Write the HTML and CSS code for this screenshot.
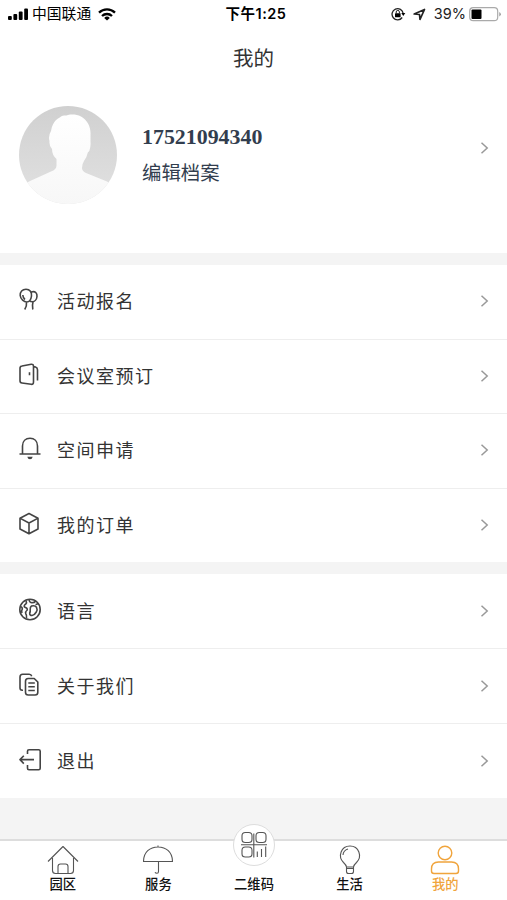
FILE: index.html
```html
<!DOCTYPE html>
<html lang="zh-CN">
<head>
<meta charset="utf-8">
<title>我的</title>
<link rel="stylesheet" href="styles.css">
</head>
<body>
<div class="app">
  <header class="status">
    <div class="status-left">
      <svg width="21" height="12" viewBox="0 0 21 12"><rect x="0" y="8" width="3.800" height="4" rx="1"/><rect x="5.400" y="6" width="3.800" height="6" rx="1"/><rect x="10.800" y="3.500" width="3.800" height="8.500" rx="1"/><rect x="16.200" y="0.500" width="3.800" height="11.500" rx="1"/></svg>
      <span class="carrier">中国联通</span>
      <svg class="wifi" width="18" height="13" viewBox="0 0 18 13"><g fill="none" stroke="#000" stroke-width="2.300"><path d="M1 4.700a11.500 11.500 0 0 1 16 0"/><path d="M4 8a7.300 7.300 0 0 1 10 0"/></g><path d="M9 12.600 6.200 9.900a4 4 0 0 1 5.600 0z"/></svg>
    </div>
    <div class="status-time">下午1:25</div>
    <div class="status-right">
      <svg width="15" height="14" viewBox="0 0 15 14"><path d="M11.200 10.500A5.600 5.600 0 1 1 12.200 6.500" fill="none" stroke="#222" stroke-width="1.300"/><path d="M10.300 6h4l-2 3z"/><rect x="4" y="6.200" width="5.600" height="4" rx=".5"/><path d="M5.200 6.500V5a1.600 1.600 0 0 1 3.200 0v1.500" fill="none" stroke="#222"/></svg>
      <svg class="arrow" width="13" height="13" viewBox="0 0 13 13"><path d="M1.200 6 11.500 1.500 7 11.300 6.500 6.500z" fill="none" stroke="#222" stroke-width="1.700" stroke-linejoin="round"/></svg>
      <span class="percent">39%</span>
      <svg class="battery" width="32" height="15" viewBox="0 0 32 15"><rect x=".7" y=".7" width="28" height="13" rx="3.500" fill="#fff" stroke="#aaa" stroke-width="1.200"/><rect x="2.500" y="2.500" width="10" height="9.500" rx="1"/><path d="M30.300 5v4.500q1.500-.7 1.500-2.200T30.300 5" fill="#999"/></svg>
    </div>
  </header>
  <h1 class="title">我的</h1>
  <section class="profile">
    <svg class="avatar" width="98" height="98" viewBox="0 0 98 98">
      <defs><clipPath id="disc"><circle cx="49" cy="49" r="49"/></clipPath>
      <linearGradient id="back" x2="0" y2="1"><stop stop-color="#d0d0d0"/><stop offset="1" stop-color="#e2e2e2"/></linearGradient>
      <linearGradient id="body" x2="0" y2="1"><stop stop-color="#fff"/><stop offset="1" stop-color="#f7f7f7"/></linearGradient></defs>
      <g clip-path="url(#disc)"><path fill="url(#back)" d="M0 0h98v98H0z"/><path fill="url(#body)" d="M32 25C34 14 39 13 42 10.500c2-1.500 5-.5 7-1.500 4-1 9-.5 13 1.500 7 4 10 11 9.500 18.500v6.500q.5 5-1.200 9.500l-1.500 1.500q-1 5-3.800 8.500-2 3-2 7 0 3 4 5L88 75.500q6 3 10 8v15H0V83.500q4-5 10-8L32 65.500q5.500-2 5.500-6V53q-4.500-4-4.500-10-3-3-2.500-8-1.500-5 1.500-10z"/></g>
    </svg>
    <div class="profile-text"><div class="phone">17521094340</div><div class="edit">编辑档案</div></div>
    <svg class="chevron" width="9" height="12" viewBox="0 0 9 12"><path d="m1.500.8 5.700 5.200-5.700 5.200"/></svg>
  </section>
  <nav class="menu">
    <a class="row"><svg class="icon" viewBox="0 0 24 24"><path d="M8 1.200c4 0 6 3.200 5.500 6.800S11.200 14 8.700 14 2.500 11 2.200 7.500 4.300 1.200 8 1.200zM13.300 4c4-1.400 6 1.300 5.700 4.500s-2.500 5.200-4.500 5.200q-2 0-3.300-1M8.500 14q.5 4-1.800 7.500M15 14q-1 3-.2 7.500M4.800 7q.2 3 2.200 4.500"/></svg><span>活动报名</span><svg class="chevron" width="9" height="12" viewBox="0 0 9 12"><path d="m1.500.8 5.700 5.200-5.700 5.200"/></svg></a>
    <a class="row"><svg class="icon" viewBox="0 0 24 24"><path d="M4 3 13.200 1.200q2.300-.2 2.300 2V19q0 2.600-2.300 2.300L4 20q-2-.2-2-2.300V5.200Q2 3.200 4 3zM15.500 3.500l2 .6q2 .6 2 2.700v10.700M11.500 9.200v3"/></svg><span>会议室预订</span><svg class="chevron" width="9" height="12" viewBox="0 0 9 12"><path d="m1.500.8 5.700 5.200-5.700 5.200"/></svg></a>
    <a class="row"><svg class="icon" viewBox="0 0 24 24"><path d="M1.500 17h21M4.500 17V9c0-5 3.300-7.700 7.500-7.700S19.500 4 19.500 9v8"/><path d="M9.300 19.800h5.400q-.5 2.500-2.700 2.500t-2.700-2.500z" fill="#444" stroke="none"/></svg><span>空间申请</span><svg class="chevron" width="9" height="12" viewBox="0 0 9 12"><path d="m1.500.8 5.700 5.200-5.700 5.200"/></svg></a>
    <a class="row"><svg class="icon" viewBox="0 0 24 24"><path d="m11 1.500 9 4.700V17l-9 4.800L2 17V6.200zM2.300 6.400 11 11l8.700-4.600M11 11v10.500"/></svg><span>我的订单</span><svg class="chevron" width="9" height="12" viewBox="0 0 9 12"><path d="m1.500.8 5.700 5.200-5.700 5.200"/></svg></a>
  </nav>
  <nav class="menu menu-last">
    <a class="row"><svg class="icon" viewBox="0 0 24 24"><circle cx="12" cy="11.500" r="10.200"/><path d="M8 2.500q1 2-.2 3.500Q5.500 7.500 6.500 9q3.200 1 2.700 3-2 1.700-1.500 3.500 1.300 2 .8 4.500M2.300 8.500q2.200.5 2 2.500-1.200 1.700-.3 4M11 1.500q.5 3.200 3 3.200t3.500-1.500M13.500 8q3.500-1 5 1.300 1.300 2.500-.2 4.700-1.800 3.200-4.300 3.500-2.500 0-2.300-2.500.8-1.500.5-3.500-.2-2.500 1.300-3.500zM17.500 6.500q1.500 0 2.500-1.300"/></svg><span>语言</span><svg class="chevron" width="9" height="12" viewBox="0 0 9 12"><path d="m1.500.8 5.700 5.200-5.700 5.200"/></svg></a>
    <a class="row"><svg class="icon" viewBox="0 0 24 24"><path d="M5 17.200H4.200q-2.200 0-2.200-2.200V4q0-2.700 2.700-2.700h6.500q2 0 2.500 2"/><path d="M10.200 5.500h6L19.800 9v10.300q0 2.700-2.700 2.700h-6.900q-2.700 0-2.700-2.700V8.200q0-2.700 2.700-2.700zM10.300 10h6.500M10.300 13.700h6.500M10.300 17.500h6.500"/></svg><span>关于我们</span><svg class="chevron" width="9" height="12" viewBox="0 0 9 12"><path d="m1.500.8 5.700 5.200-5.700 5.200"/></svg></a>
    <a class="row"><svg class="icon" viewBox="0 0 24 24"><path d="M9.500 6V3.200q0-1.500 1.500-1.500h9.700q1.500 0 1.500 1.500v17q0 1.500-1.500 1.500H11q-1.500 0-1.500-1.500V17M16 11.600H2M5.800 7.700 2 11.600l3.800 4"/></svg><span>退出</span><svg class="chevron" width="9" height="12" viewBox="0 0 9 12"><path d="m1.500.8 5.700 5.200-5.700 5.200"/></svg></a>
  </nav>
  <footer class="tabs">
    <a class="tab"><svg width="34" height="32" viewBox="0 0 34 32"><path d="M2 17.500 17 2.500l15 15M6.500 14v12.500q0 3 3 3h15q3 0 3-3V14M12 29.500v-7q0-2.500 2.500-2.500h5q2.500 0 2.500 2.500v7"/></svg><span>园区</span></a>
    <a class="tab"><svg width="34" height="32" viewBox="0 0 34 32"><path d="M17 1.500V3M2.500 17.500C2.500 8 9 3 17 3s14.500 5 14.500 14.500zM17.500 17.500v10q0 1.800-1.500 1.800t-2-1"/></svg><span>服务</span></a>
    <a class="tab"><span class="scan"><svg width="28" height="28" viewBox="0 0 28 28"><rect x="2" y="1.500" width="10" height="10" rx="3.300"/><rect x="16" y="1.500" width="10" height="10" rx="3.300"/><rect x="2" y="16" width="10" height="10" rx="3.300"/><path d="M13.800 2.500v24M1 13.700h26M17.300 20.500v5.500M21.500 18v8M25.700 15.500v10.500"/></svg></span><span>二维码</span></a>
    <a class="tab"><svg width="34" height="32" viewBox="0 0 34 32"><path d="M13.500 23q-.3-2-3-4.500c-6-6-2.500-16.500 6.500-16.500s12.500 10.500 6.500 16.500q-2.700 2.500-3 4.500zM13.500 23v4.500q0 2 2 2h3q2 0 2-2V23M10 11q.3-4.500 5-6M13.500 24.500h7"/></svg><span>生活</span></a>
    <a class="tab active"><svg width="34" height="32" viewBox="0 0 34 32"><circle cx="17" cy="9" r="6.800"/><path d="M3.500 27v-2q0-7 7-7h13q7 0 7 7v2q0 2.500-2.500 2.500H6q-2.500 0-2.500-2.500z"/></svg><span>我的</span></a>
  </footer>
</div>
</body>
</html>
```
FILE: styles.css
```css
* { box-sizing: border-box; }
body { margin: 0; background: #f4f4f4; font-family: "Liberation Sans", "Noto Sans CJK SC", sans-serif; color: #333; }
.app { height: 900px; display: flex; flex-direction: column; overflow: hidden; }
.status { height: 28px; flex: none; display: grid; grid-template-columns: 1fr auto 1fr; align-items: center; padding: 0 6px 0 8px; background: #fff; color: #000; font-family: Inter, "Noto Sans CJK SC", sans-serif; font-size: 15px; line-height: 28px; white-space: nowrap; }
.status-left, .status-right { display: flex; align-items: center; }
.status-right { justify-content: flex-end; }
.status-time { font-weight: 600; font-size: 14.500px; letter-spacing: .5px; padding-left: 3px; }
.carrier { margin-left: 3px; font-size: 14.800px; }
.wifi { margin-left: 7px; }
.arrow { margin: 0 8px 0 7px; }
.percent { font-size: 14.500px; color: #222; }
.battery { margin-left: 3px; }
.title { margin: 0; height: 60px; flex: none; background: #fff; text-align: center; font-size: 20.500px; font-weight: 400; line-height: 62px; }
.profile { height: 165px; flex: none; display: flex; align-items: flex-start; padding: 18px 18px 0 19px; background: #fff; color: #323d4e; }
.profile-text { margin: 17px 0 0 25px; flex: 1; }
.phone { font: bold 21.900px/28px "Liberation Serif", serif; }
.edit { font-size: 19.400px; line-height: 30px; margin-top: 7px; }
.profile .chevron { margin-top: 36px; }
.chevron { flex: none; fill: none; stroke: #999; stroke-width: 1.500; }
.menu { margin-top: 12px; flex: none; height: 297px; display: flex; flex-direction: column; background: #fff; }
.menu-last { height: 224px; }
.row { flex: 1; display: flex; align-items: center; padding: 0 18px 1px; border-bottom: 1px solid #eee; font-size: 18px; letter-spacing: 1.500px; }
.row:last-child { border-bottom: 0; }
.row span { flex: 1; margin: -2px 0 0 15px; }
.icon { width: 24px; height: 24px; flex: none; fill: none; stroke: #444; stroke-width: 1.600; stroke-linejoin: round; margin-top: -2px; }
.tabs { height: 61px; flex: none; margin-top: auto; display: flex; justify-content: center; padding: 0 14px 0 15px; border-top: 2px solid #ddd; background: #fff; color: #111; }
.tab { flex: 1; display: flex; flex-direction: column; align-items: center; padding-top: 3px; font-size: 13.300px; font-weight: 500; line-height: 18px; }
.tab svg { flex: none; fill: none; stroke: #555; stroke-width: 1.100; stroke-linejoin: round; }
.scan { width: 42px; height: 42px; flex: none; margin: -20px 0 10px; display: flex; align-items: center; justify-content: center; border: 1px solid #ddd; border-radius: 50%; background: #fff; }
.tab.active { color: #f0a43c; }
.tab.active svg { stroke: #f0a43c; stroke-width: 1.400; }
```
